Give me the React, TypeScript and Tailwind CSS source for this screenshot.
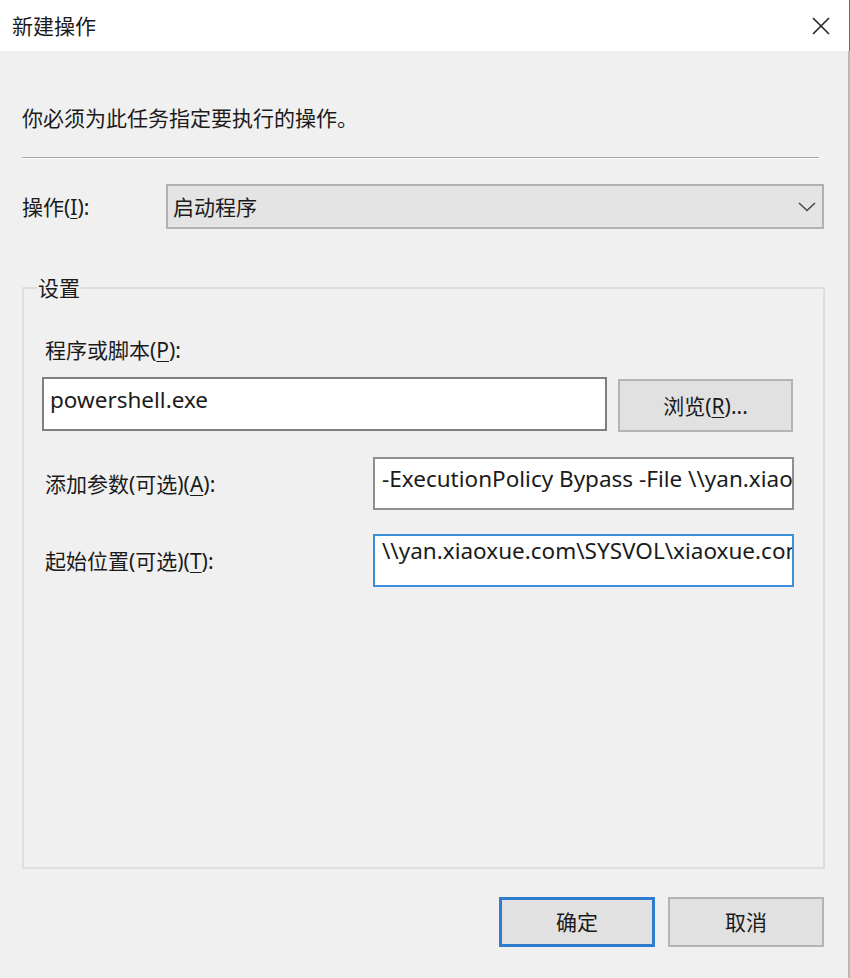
import React from "react"

function Key({ k }: { k: string }) {
  return <span className="underline underline-offset-[3px] decoration-1">{k}</span>
}

function Field({ text, focused }: { text: string; focused?: boolean }) {
  return (
    <div
      className={
        "w-[421px] h-[53px] bg-white border-2 pl-[7px] overflow-hidden whitespace-nowrap text-[22.5px] " +
        (focused ? "border-[#3c8fd6] pt-0" : "border-[#8f8f8f] pt-[5px]")
      }
    >
      {text}
    </div>
  )
}

export default function App() {
  return (
    <div className="w-[850px] h-[978px] flex flex-col bg-[#f0f0f0] text-[21px] leading-[30px] text-[#1b1b1b] font-['Noto_Sans','Noto_Sans_CJK_SC',sans-serif] border-r-2 border-[#b9b9b9]">
      <div className="h-[51px] bg-white flex items-center justify-between pl-[12px] pr-[19px] shrink-0 border-r border-[#6f6f6f] mr-[-2px]">
        <span>新建操作</span>
        <svg width="18" height="18" viewBox="0 0 18 18" className="text-[#222]">
          <path d="M1 1L17 17M17 1L1 17" stroke="currentColor" strokeWidth="1.6" />
        </svg>
      </div>

      <div className="flex-1 flex flex-col pl-[22px]">
        <p className="mt-[52px]">你必须为此任务指定要执行的操作。</p>
        <div className="mt-[24px] w-[797px] h-[2px] border-t border-[#a9a9a9] border-b border-b-white" />

        <div className="mt-[25px] flex items-center">
          <span className="w-[144px]">
            操作(<Key k="I" />):
          </span>
          <div className="w-[658px] h-[45px] bg-[#e4e4e4] border-2 border-[#b1b1b1] flex items-center justify-between pl-[5px] pr-[6px]">
            <span>启动程序</span>
            <svg width="18" height="10" viewBox="0 0 18 10">
              <path d="M1 1L9 8.5L17 1" fill="none" stroke="#4a4a4a" strokeWidth="1.6" />
            </svg>
          </div>
        </div>

        <fieldset className="mt-[44px] w-[803px] h-[596px] border-2 border-[#dedede] pl-[18px] flex flex-col">
          <legend className="ml-[-5px] px-[1px]">设置</legend>
          <div className="mt-[32px] pl-[3px]">
            程序或脚本(<Key k="P" />):
          </div>
          <div className="mt-[12px] flex items-start gap-[11px]">
            <div className="w-[565px] h-[54px] bg-white border-2 border-[#7f7f7f] pl-[6px] pt-[6px] whitespace-nowrap overflow-hidden text-[22.5px]">
              powershell.exe
            </div>
            <button className="mt-[2px] w-[175px] h-[53px] bg-[#e1e1e1] border-2 border-[#b4b4b4]">
              浏览(<Key k="R" />)...
            </button>
          </div>

          <div className="mt-[25px] flex items-center">
            <span className="w-[331px] pl-[3px]">
              添加参数(可选)(<Key k="A" />):
            </span>
            <Field text="-ExecutionPolicy Bypass -File \\yan.xiaoxue.com\SYSVOL\xiaoxue.com\scripts\run.ps1" />
          </div>

          <div className="mt-[24px] flex items-center">
            <span className="w-[331px] pl-[3px]">
              起始位置(可选)(<Key k="T" />):
            </span>
            <Field text="\\yan.xiaoxue.com\SYSVOL\xiaoxue.com\scripts" focused />
          </div>
        </fieldset>

        <div className="mt-[28px] w-[802px] flex justify-end gap-[13px]">
          <button className="w-[156px] h-[50px] bg-[#e1e1e1] border-[3px] border-[#2f7bd0]">确定</button>
          <button className="w-[156px] h-[50px] bg-[#e1e1e1] border-2 border-[#b4b4b4]">取消</button>
        </div>
      </div>
    </div>
  )
}
